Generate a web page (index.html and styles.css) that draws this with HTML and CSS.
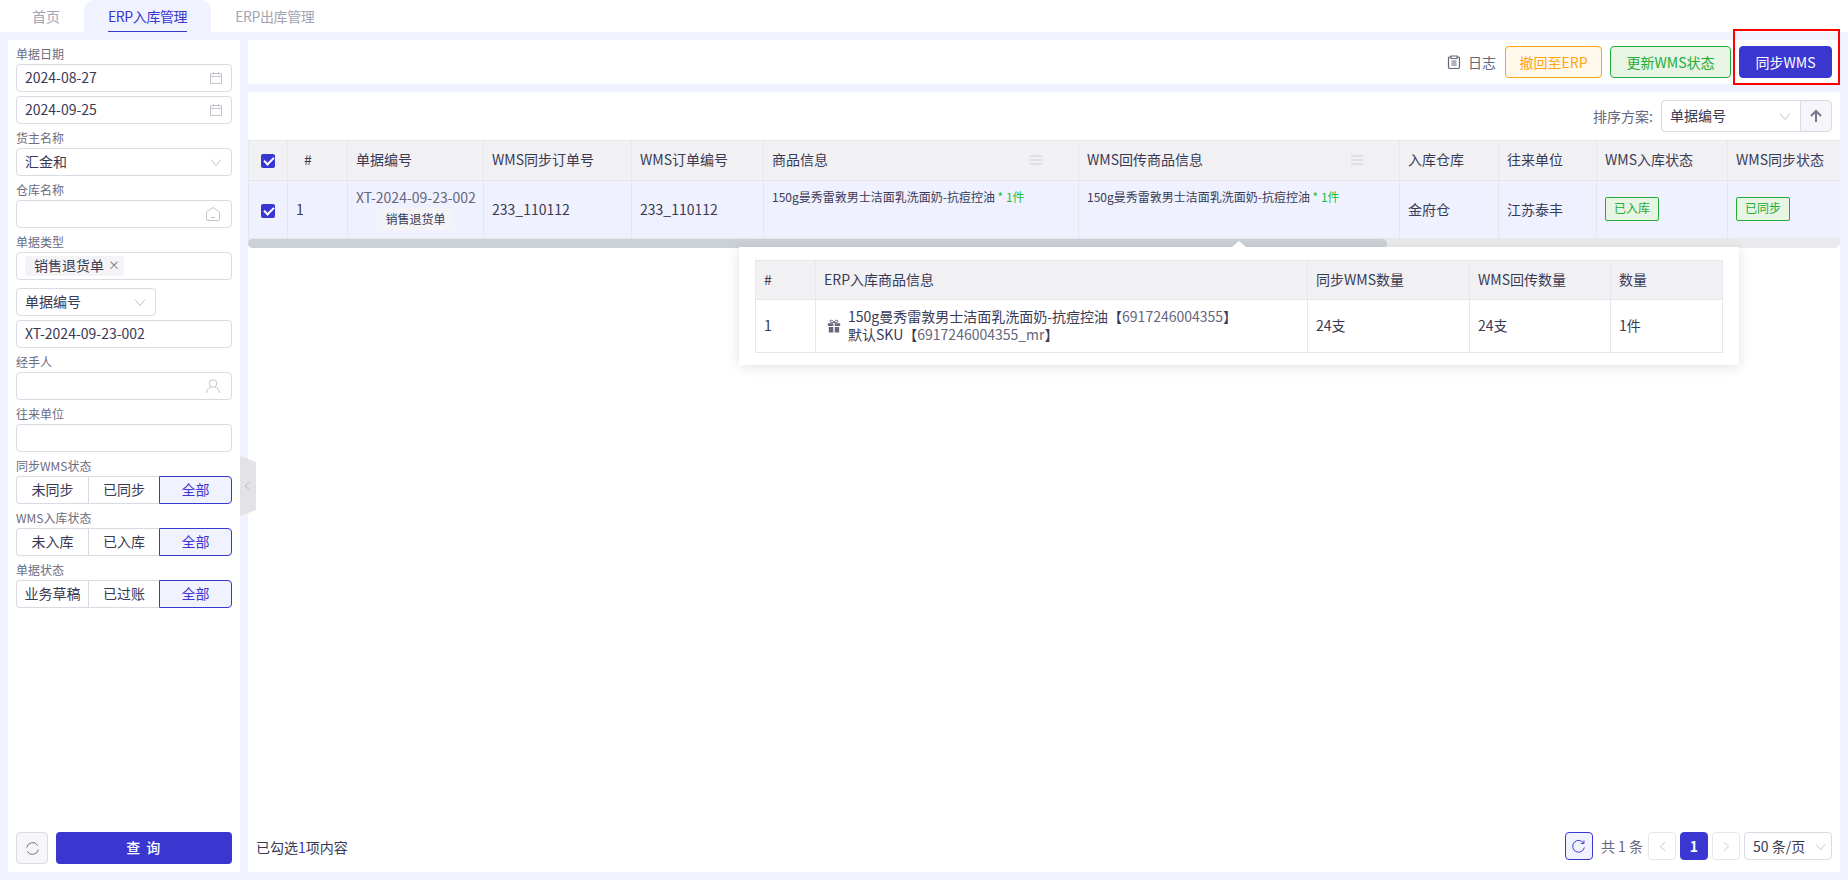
FILE: index.html
```html
<!DOCTYPE html>
<html lang="zh-CN">
<head>
<meta charset="UTF-8">
<meta name="viewport" content="width=device-width, initial-scale=1.0">
<title>ERP入库管理</title>
<link rel="stylesheet" href="styles.css">
</head>
<body>
<!-- Tabs -->
<div class="tabs">
  <div class="tab">首页</div>
  <div class="tab active"><span>ERP入库管理</span></div>
  <div class="tab">ERP出库管理</div>
</div>

<div class="content">
  <!-- Filter sidebar -->
  <aside class="sidebar">
    <div class="filters">
      <label class="field-label">单据日期</label>
      <div class="input">2024-08-27
        <svg class="input-icon" viewBox="0 0 14 14"><path d="M1.5 2.5h11v10h-11zM1.5 5.5h11M4.5 1v2.5M9.5 1v2.5"/></svg>
      </div>
      <div class="input stacked">2024-09-25
        <svg class="input-icon" viewBox="0 0 14 14"><path d="M1.5 2.5h11v10h-11zM1.5 5.5h11M4.5 1v2.5M9.5 1v2.5"/></svg>
      </div>
      <label class="field-label">货主名称</label>
      <div class="input">汇金和
        <svg class="input-icon" viewBox="0 0 14 14"><path d="M2 4.5l5 6 5-6"/></svg>
      </div>
      <label class="field-label">仓库名称</label>
      <div class="input">
        <svg class="input-icon wide" viewBox="0 0 16 16"><path d="M1.5 6l6.5-4.5L14.500 6v7a1.500 1.500 0 0 1-1.500 1.500H3A1.500 1.500 0 0 1 1.500 13zM6 11.500h4"/></svg>
      </div>
      <label class="field-label">单据类型</label>
      <div class="input"><span class="tag">销售退货单<i class="tag-x">×</i></span></div>
      <div class="input short">单据编号
        <svg class="input-icon" viewBox="0 0 14 14"><path d="M2 4.5l5 6 5-6"/></svg>
      </div>
      <div class="input stacked">XT-2024-09-23-002</div>
      <label class="field-label">经手人</label>
      <div class="input">
        <svg class="input-icon wide" viewBox="0 0 16 16"><circle cx="8" cy="5.500" r="3.800"/><path d="M1.500 15c.4-3.500 2.500-5.700 4.500-6M14.500 15c-.4-3.500-2.500-5.700-4.500-6"/></svg>
      </div>
      <label class="field-label">往来单位</label>
      <div class="input"></div>
      <label class="field-label">同步WMS状态</label>
      <div class="segments"><div class="seg">未同步</div><div class="seg">已同步</div><div class="seg on">全部</div></div>
      <label class="field-label">WMS入库状态</label>
      <div class="segments"><div class="seg">未入库</div><div class="seg">已入库</div><div class="seg on">全部</div></div>
      <label class="field-label">单据状态</label>
      <div class="segments"><div class="seg">业务草稿</div><div class="seg">已过账</div><div class="seg on">全部</div></div>
    </div>
    <div class="side-actions">
      <button class="reset-btn">
        <svg viewBox="0 0 16 16" width="15" height="15"><path d="M1.800 7A6.300 6.300 0 0 1 13.500 5M14.200 9A6.300 6.300 0 0 1 2.500 11"/></svg>
      </button>
      <button class="query-btn">查 询</button>
    </div>
    <div class="collapse-handle">
      <svg viewBox="0 0 8 12" width="6" height="10"><path d="M7 1L1.500 6 7 11"/></svg>
    </div>
  </aside>

  <main class="main">
    <!-- Toolbar -->
    <div class="toolbar">
      <span class="log">
        <svg viewBox="0 0 14 14" width="14" height="14"><path d="M3.500 2H2.500a1 1 0 0 0-1 1v9a1.500 1.500 0 0 0 1.500 1.500h8a1.500 1.500 0 0 0 1.500-1.500V3a1 1 0 0 0-1-1h-1M4 1h6v2.500H4zM4.500 6h5M4.500 8h5M4.500 10h5"/></svg>
        日志
      </span>
      <button class="btn btn-orange">撤回至ERP</button>
      <button class="btn btn-green">更新WMS状态</button>
      <button class="btn btn-primary">同步WMS</button>
      <div class="red-mark"></div>
    </div>

    <div class="panel">
      <div class="sort-row">
        <span class="sort-label">排序方案:</span>
        <div class="sort-select">单据编号
          <svg class="input-icon" viewBox="0 0 14 14"><path d="M2 4.500l5 6 5-6"/></svg>
        </div>
        <div class="sort-dir">
          <svg viewBox="0 0 14 14" width="14" height="14"><path d="M7 13V2M2 7l5-5 5 5"/></svg>
        </div>
      </div>

      <div class="table-box">
        <div class="table-scroll">
          <table class="grid">
            <colgroup>
              <col class="c-check"><col class="c-idx"><col class="c-no"><col class="c-sync"><col class="c-order">
              <col class="c-goods"><col class="c-back"><col class="c-wh"><col class="c-unit"><col class="c-in"><col class="c-st">
            </colgroup>
            <thead>
              <tr>
                <th class="center"><span class="check"></span></th>
                <th class="idx-head">#</th>
                <th>单据编号</th>
                <th>WMS同步订单号</th>
                <th>WMS订单编号</th>
                <th><div class="th-menu">商品信息<i class="menu-icon"></i></div></th>
                <th><div class="th-menu">WMS回传商品信息<i class="menu-icon"></i></div></th>
                <th>入库仓库</th>
                <th>往来单位</th>
                <th>WMS入库状态</th>
                <th>WMS同步状态</th>
              </tr>
            </thead>
            <tbody>
              <tr>
                <td class="center"><span class="check"></span></td>
                <td>1</td>
                <td class="center doc-cell">
                  <div class="doc-no">XT-2024-09-23-002</div>
                  <span class="doc-type">销售退货单</span>
                </td>
                <td>233_110112</td>
                <td>233_110112</td>
                <td class="goods">150g曼秀雷敦男士洁面乳洗面奶-抗痘控油<em> * 1件</em></td>
                <td class="goods">150g曼秀雷敦男士洁面乳洗面奶-抗痘控油<em> * 1件</em></td>
                <td>金府仓</td>
                <td>江苏泰丰</td>
                <td><span class="status">已入库</span></td>
                <td><span class="status">已同步</span></td>
              </tr>
            </tbody>
          </table>
        </div>
        <div class="scrollbar"><div class="scroll-thumb"></div></div>

        <!-- Detail popover -->
        <div class="popover">
          <table class="detail">
            <colgroup>
              <col class="d-idx"><col class="d-info"><col class="d-sync"><col class="d-back"><col class="d-qty">
            </colgroup>
            <thead>
              <tr><th>#</th><th>ERP入库商品信息</th><th>同步WMS数量</th><th>WMS回传数量</th><th>数量</th></tr>
            </thead>
            <tbody>
              <tr>
                <td>1</td>
                <td>
                  <div class="sku">
                    <svg class="gift" viewBox="0 0 14 14" width="14" height="14"><path d="M7 3.500C5.800.8 3.200.6 3 2.200 2.900 3.200 4.500 3.800 7 3.500zM7 3.500C8.200.8 10.800.6 11 2.200 11.100 3.200 9.500 3.800 7 3.500z"/><path class="gift-fill" d="M.8 4.200h5.500v2.800H.8zM7.700 4.200h5.500v2.800H7.700zM1.800 8h4.500v5.500H1.800zM7.700 8h4.500v5.500H7.700z"/></svg>
                    <div>
                      150g曼秀雷敦男士洁面乳洗面奶-抗痘控油【<span class="code">6917246004355</span>】<br>
                      默认SKU【<span class="code">6917246004355_mr</span>】
                    </div>
                  </div>
                </td>
                <td>24支</td>
                <td>24支</td>
                <td>1件</td>
              </tr>
            </tbody>
          </table>
        </div>
      </div>

      <div class="panel-foot">
        <span class="picked">已勾选<b>1</b>项内容</span>
        <div class="pager">
          <span class="page-btn refresh">
            <svg viewBox="0 0 16 16" width="15" height="15"><path d="M13.500 4.500A6.300 6.300 0 1 0 14.300 9M13.800 1.500v3.300h-3.300"/></svg>
          </span>
          <span class="total">共 1 条</span>
          <span class="page-btn muted"><svg viewBox="0 0 8 12" width="7" height="11"><path d="M7 1L1.500 6 7 11"/></svg></span>
          <span class="page-btn current">1</span>
          <span class="page-btn muted"><svg viewBox="0 0 8 12" width="7" height="11"><path d="M1 1l5.500 5L1 11"/></svg></span>
          <span class="page-size">50 条/页
            <svg viewBox="0 0 14 14" width="13" height="13"><path d="M2 4.500l5 6 5-6"/></svg>
          </span>
        </div>
      </div>
    </div>
  </main>
</div>
</body>
</html>
```

FILE: styles.css
```css
* {
  box-sizing: border-box;
}
html, body {
  margin: 0;
  height: 100%;
}
body {
  font-family: "Noto Sans CJK SC", "Noto Sans", sans-serif;
  font-size: 14px;
  line-height: 20px;
  color: #3a3a55;
  background-color: #f0f2ff;
  display: flex;
  flex-direction: column;
  overflow: hidden;
}
svg {
  fill: none;
  stroke: currentColor;
  stroke-width: 1;
}
button {
  font-family: inherit;
  cursor: pointer;
}

/* tabs */
.tabs {
  height: 32px;
  flex: none;
  background-color: #fff;
  display: flex;
  padding-left: 8px;
}
.tab {
  padding: 0 24px;
  line-height: 32px;
  letter-spacing: -0.4px;
  color: #a3a3b2;
}
.tab:first-child {
  letter-spacing: 0;
}
.tab.active {
  background-color: #f0f2ff;
  border-radius: 10px 10px 0 0;
  color: #3a37d1;
}
.tab.active span {
  display: block;
  height: 32px;
  border-bottom: 1px solid #3a37d1;
}

.content {
  flex: 1;
  min-height: 0;
  display: flex;
  gap: 8px;
  padding: 8px;
}

/* sidebar */
.sidebar {
  width: 232px;
  flex: none;
  background-color: #fff;
  padding: 0 8px 8px;
  display: flex;
  flex-direction: column;
  justify-content: space-between;
  position: relative;
}
.field-label {
  display: block;
  height: 24px;
  font-size: 12px;
  line-height: 28px;
  color: #6c6c80;
}
.input {
  height: 28px;
  border: 1px solid #dadae4;
  border-radius: 4px;
  padding: 0 8px 2px;
  display: flex;
  align-items: center;
  justify-content: space-between;
  background-color: #fff;
}
.input.stacked {
  margin-top: 4px;
}
.input.short {
  width: 140px;
  margin-top: 8px;
}
.input-icon {
  width: 14px;
  height: 14px;
  margin-top: 2px;
  color: #c4c4ce;
}
.input-icon.wide {
  width: 16px;
  height: 16px;
  margin-left: auto;
  margin-right: 2px;
}
.tag {
  height: 20px;
  background-color: #f4f4f6;
  border-radius: 2px;
  margin-top: 2px;
  padding: 0 4px 2px 9px;
  display: inline-flex;
  align-items: center;
}
.tag-x {
  font-style: normal;
  color: #77778a;
  margin-left: 4px;
  font-size: 12px;
}
.segments {
  height: 28px;
  display: grid;
  grid-template-columns: 72px 71px 73px;
}
.seg {
  border: 1px solid #dadae4;
  border-right: 0;
  text-align: center;
  line-height: 24px;
}
.seg:first-child {
  border-radius: 4px 0 0 4px;
}
.seg.on {
  border: 1px solid #3a37d1;
  border-radius: 0 4px 4px 0;
  background-color: #f0f2ff;
  color: #3a37d1;
}
.side-actions {
  display: flex;
  gap: 8px;
}
.reset-btn {
  width: 32px;
  height: 32px;
  flex: none;
  padding: 0;
  border: 1px solid #dadae4;
  border-radius: 4px;
  background-color: #f6f6fa;
  color: #66667c;
  display: flex;
  align-items: center;
  justify-content: center;
}
.query-btn {
  flex: 1;
  height: 32px;
  border: 0;
  border-radius: 4px;
  padding: 0 0 2px;
  background-color: #3a37d1;
  color: #fff;
  font-size: 14px;
  font-weight: 500;
  letter-spacing: 1.5px;
}
.collapse-handle {
  position: absolute;
  left: 100%;
  top: 416px;
  width: 16px;
  height: 60px;
  background-color: #e3e3e5;
  clip-path: polygon(0 0, 100% 6px, 100% 54px, 0 100%);
  color: #a9a9b5;
  display: flex;
  align-items: center;
  padding-left: 4px;
  z-index: 2;
}

/* main column */
.main {
  flex: 1;
  min-width: 0;
  display: flex;
  flex-direction: column;
  gap: 8px;
}
.toolbar {
  height: 44px;
  flex: none;
  background-color: #fff;
  display: flex;
  align-items: center;
  justify-content: flex-end;
  gap: 8px;
  padding-right: 8px;
  position: relative;
}
.log {
  display: flex;
  align-items: center;
  gap: 7px;
  margin-right: 1px;
  color: #66667c;
}
.log svg {
  stroke-width: 1.2;
}
.btn {
  height: 32px;
  padding: 0 0 1px;
  border: 1px solid;
  border-radius: 4px;
  font-size: 14px;
}
.btn-orange {
  width: 97px;
  border-color: #ffa30f;
  background-color: #fff9ec;
  color: #ffa30f;
}
.btn-green {
  width: 121px;
  border-color: #22ad38;
  background-color: #e8f4e4;
  color: #22ad38;
}
.btn-primary {
  width: 93px;
  border-color: #3a37d1;
  background-color: #3a37d1;
  color: #fff;
}
.red-mark {
  position: absolute;
  right: 0;
  top: -11px;
  width: 107px;
  height: 56px;
  border: 2px solid #ff0000;
  pointer-events: none;
}

/* table panel */
.panel {
  flex: 1;
  min-height: 0;
  background-color: #fff;
  display: flex;
  flex-direction: column;
}
.sort-row {
  height: 48px;
  flex: none;
  display: flex;
  align-items: center;
  justify-content: flex-end;
  padding-right: 8px;
}
.sort-label {
  color: #66667c;
  margin-right: 8px;
}
.sort-select {
  width: 140px;
  height: 32px;
  border: 1px solid #dadae4;
  border-radius: 4px 0 0 4px;
  padding: 0 8px 2px;
  display: flex;
  align-items: center;
  justify-content: space-between;
}
.sort-dir {
  width: 32px;
  height: 32px;
  border: 1px solid #dadae4;
  margin-left: -1px;
  border-radius: 0 4px 4px 0;
  background-color: #f6f6fa;
  color: #77778a;
  display: flex;
  align-items: center;
  justify-content: center;
}
.sort-dir svg {
  stroke-width: 2;
}
.table-box {
  position: relative;
  flex: none;
}
.table-scroll {
  overflow: hidden;
}
.grid {
  table-layout: fixed;
  border-collapse: collapse;
  width: 1611px;
}
.c-check { width: 39px; }
.c-idx { width: 60px; }
.c-no { width: 136px; }
.c-sync { width: 148px; }
.c-order { width: 132px; }
.c-goods { width: 315px; }
.c-back { width: 321px; }
.c-wh { width: 99px; }
.c-unit { width: 98px; }
.c-in { width: 131px; }
.c-st { width: 132px; }
.grid th, .grid td {
  border: 1px solid #e6e6ed;
  padding: 0 8px 2px;
  text-align: left;
  font-weight: 400;
  white-space: nowrap;
  overflow: hidden;
}
.grid th {
  height: 40px;
  padding-bottom: 3px;
  background-color: #f1f1f4;
}
.grid td {
  height: 58px;
  background-color: #eff1fe;
}
.grid .center {
  text-align: center;
}
.grid .idx-head {
  padding-left: 16px;
}
.grid .check {
  vertical-align: middle;
}
.check {
  display: inline-block;
  width: 14px;
  height: 14px;
  border-radius: 2px;
  background-color: #3a37d1;
  position: relative;
}
.check::after {
  content: "";
  position: absolute;
  left: 3px;
  top: 3px;
  width: 8px;
  height: 4px;
  border-left: 2px solid #fff;
  border-bottom: 2px solid #fff;
  transform: rotate(-45deg);
}
.th-menu {
  display: flex;
  justify-content: space-between;
  align-items: center;
}
.menu-icon {
  width: 12px;
  height: 10px;
  margin-right: 28px;
  margin-top: 2px;
  border-top: 2px solid #dedee3;
  border-bottom: 2px solid #dedee3;
  position: relative;
}
.menu-icon::after {
  content: "";
  position: absolute;
  left: 0;
  right: 0;
  top: 2px;
  border-top: 2px solid #dedee3;
}
.grid td.doc-cell {
  padding-bottom: 3px;
}
.doc-no {
  color: #66667c;
  line-height: 20px;
  margin-bottom: 1px;
}
.doc-type {
  display: inline-block;
  font-size: 12px;
  line-height: 22px;
  padding: 0 8px;
  background-color: #f4f4f6;
}
.grid td.goods {
  font-size: 12px;
  vertical-align: top;
  padding-top: 6px;
}
.goods em {
  font-style: normal;
  color: #19be3c;
}
.status {
  display: inline-block;
  height: 24px;
  line-height: 20px;
  padding: 0 8px;
  font-size: 12px;
  color: #22ad38;
  background-color: #e8f4e4;
  border: 1px solid #22ad38;
  border-radius: 2px;
}
.scrollbar {
  height: 9px;
  background-color: #ebebee;
  border-radius: 0 0 5px 5px;
}
.scroll-thumb {
  width: 1139px;
  height: 9px;
  border-radius: 5px;
  background-color: #ccd1d8;
}

/* detail popover */
.popover {
  position: absolute;
  left: 491px;
  top: 107px;
  width: 1000px;
  padding: 13px 16px 12px;
  background-color: #fff;
  box-shadow: 0 2px 12px rgba(0, 0, 0, 0.12);
  z-index: 3;
}
.popover::before {
  content: "";
  position: absolute;
  left: 493px;
  top: -6px;
  border-left: 7px solid transparent;
  border-right: 7px solid transparent;
  border-bottom: 6px solid #fff;
}
.detail {
  table-layout: fixed;
  border-collapse: collapse;
  width: 967px;
}
.d-idx { width: 60px; }
.d-info { width: 492px; }
.d-sync { width: 162px; }
.d-back { width: 141px; }
.d-qty { width: 112px; }
.detail th, .detail td {
  border: 1px solid #e6e6ed;
  padding: 0 8px 2px;
  text-align: left;
  font-weight: 400;
}
.detail th {
  height: 39px;
  background-color: #f1f1f4;
}
.detail td {
  height: 53px;
  line-height: 18px;
}
.sku {
  display: flex;
  align-items: center;
  gap: 7px;
  padding-left: 3px;
}
.gift {
  color: #66667c;
  flex: none;
  margin-top: 2px;
}
.gift .gift-fill {
  fill: #66667c;
  stroke: none;
}
.code {
  color: #66667c;
}

/* footer */
.panel-foot {
  margin-top: auto;
  height: 44px;
  flex: none;
  display: flex;
  align-items: center;
  justify-content: space-between;
  padding: 0 8px 8px;
}
.picked {
  margin-top: 2px;
}
.picked b {
  font-weight: 400;
  color: #3a37d1;
}
.pager {
  display: flex;
  align-items: center;
  gap: 4px;
}
.page-btn {
  width: 28px;
  height: 28px;
  border: 1px solid #e6e6ed;
  border-radius: 4px;
  display: flex;
  align-items: center;
  justify-content: center;
}
.page-btn.refresh {
  border-color: #3a37d1;
  background-color: #f0f2ff;
  color: #3a37d1;
  margin-right: 4px;
}
.page-btn.muted {
  color: #c4c4ce;
}
.page-btn.current {
  border-color: #3a37d1;
  background-color: #3a37d1;
  color: #fff;
  font-weight: 700;
}
.total {
  color: #66667c;
  margin-right: 1px;
}
.page-size {
  width: 88px;
  height: 28px;
  border: 1px solid #dadae4;
  border-radius: 4px;
  padding: 0 4px 0 8px;
  display: flex;
  align-items: center;
  justify-content: space-between;
  white-space: nowrap;
}
.page-size svg {
  color: #c4c4ce;
}
```
